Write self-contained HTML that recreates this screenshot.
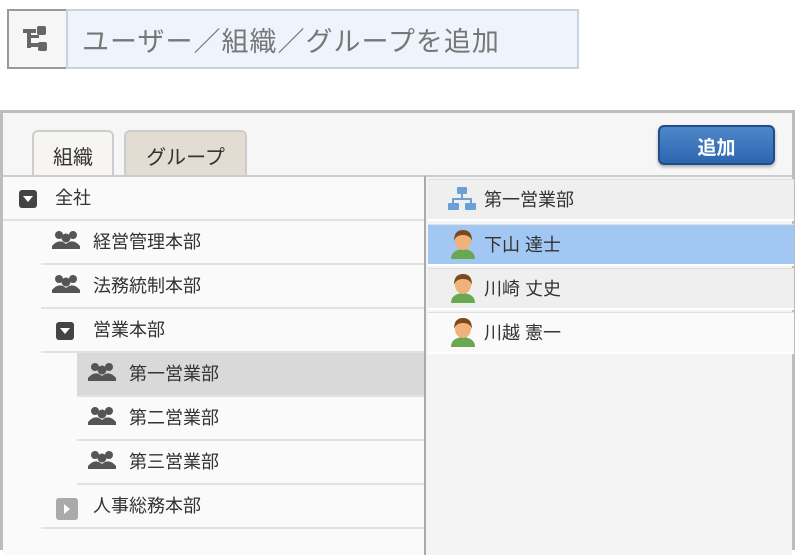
<!DOCTYPE html>
<html><head><meta charset="utf-8"><style>
*{box-sizing:border-box;margin:0;padding:0}
body{width:795px;height:542px;overflow:hidden;background:#fff;font-family:"Liberation Sans","Noto Sans CJK JP",sans-serif;color:#333;position:relative}
.ib{position:absolute;left:7px;top:9px;width:59px;height:60px;border:2px solid #9a9a9a;border-right:none;background:#f6f6f6}
.inp{position:absolute;left:66px;top:9px;width:513px;height:60px;border:2px solid #c9d3dd;background:#edf4fb;font-size:27px;color:#777;padding:9px 0 0 14px;letter-spacing:1px}
.panel{position:absolute;left:0;top:110px;width:795px;height:440px;border:3px solid #bdbdbd;background:#f6f6f6}
.tab{position:absolute;top:17px;height:47px;border:2px solid #ccc;border-bottom:none;border-radius:6px 6px 0 0;font-size:20px;text-align:center;padding-top:9px;color:#333}
.btn{position:absolute;left:655px;top:12px;width:117px;height:40px;border:2px solid #1f4d8a;border-radius:6px;background:linear-gradient(#4f86c8,#2d67b0);color:#fff;font-weight:bold;font-size:19px;text-align:center;padding-top:6px;box-shadow:0 2px 3px rgba(0,0,0,.3)}
.left{position:absolute;left:0;top:62px;width:422px;height:380px;border-top:2px solid #ccc;background:#fafafa;overflow:hidden}
.right{position:absolute;left:421px;top:62px;width:368px;height:380px;border-top:2px solid #ccc;border-left:2px solid #aaa;background:#f4f4f4}
.row{position:absolute;height:44px;border-bottom:2px solid #e2e2e2;font-size:18px;padding-top:7px}
.rr{position:absolute;left:2px;width:366px;height:42px;font-size:18px;padding:6px 0 0 56px;background:#efefef;border-bottom:2px solid #fff;border-top:1px solid #e0e0e0}
.ico{position:absolute}
</style></head><body>
<div class="ib"><svg width="57" height="58"><g fill="#666"><rect x="14" y="18" width="13" height="4"/><rect x="18" y="18" width="4" height="19"/><rect x="18" y="32" width="12" height="4"/><rect x="18" y="24" width="12" height="3"/><rect x="28" y="15" width="9" height="9" rx="2"/><rect x="29" y="31" width="9" height="9" rx="2"/></g></svg></div>
<div class="inp">ユーザー／組織／グループを追加</div>
<div class="panel">
<div class="tab" style="left:29px;width:82px;background:#f7f5f1">組織</div>
<div class="tab" style="left:121px;width:123px;background:#e3dcd3">グループ</div>
<div class="btn">追加</div>
<div class="left">
<div class="row" style="left:0;top:0;width:422px;padding-left:52px"><span class="ico" style="left:16px;top:13px;width:18px;height:18px;background:#444;border-radius:3px"><span style="position:absolute;left:4px;top:6px;border:5px solid transparent;border-top:6px solid #fff"></span></span>全社</div>
<div class="row" style="left:38px;top:44px;width:384px;padding-left:52px"><svg class="ico" style="left:10px;top:8px" width="30" height="22"><g fill="#555"><circle cx="8" cy="6" r="4"/><circle cx="22" cy="6" r="4"/><circle cx="15" cy="9" r="4.5"/><path d="M1 17q7-8 14-2 7-6 14 2v3H1z"/></g></svg>経営管理本部</div>
<div class="row" style="left:38px;top:88px;width:384px;padding-left:52px"><svg class="ico" style="left:10px;top:8px" width="30" height="22"><g fill="#555"><circle cx="8" cy="6" r="4"/><circle cx="22" cy="6" r="4"/><circle cx="15" cy="9" r="4.5"/><path d="M1 17q7-8 14-2 7-6 14 2v3H1z"/></g></svg>法務統制本部</div>
<div class="row" style="left:38px;top:132px;width:384px;padding-left:52px"><span class="ico" style="left:15px;top:13px;width:18px;height:18px;background:#444;border-radius:3px"><span style="position:absolute;left:4px;top:6px;border:5px solid transparent;border-top:6px solid #fff"></span></span>営業本部</div>
<div class="row" style="left:74px;top:176px;width:348px;padding-left:52px;background:#d9d9d9"><svg class="ico" style="left:10px;top:8px" width="30" height="22"><g fill="#555"><circle cx="8" cy="6" r="4"/><circle cx="22" cy="6" r="4"/><circle cx="15" cy="9" r="4.5"/><path d="M1 17q7-8 14-2 7-6 14 2v3H1z"/></g></svg>第一営業部</div>
<div class="row" style="left:74px;top:220px;width:348px;padding-left:52px"><svg class="ico" style="left:10px;top:8px" width="30" height="22"><g fill="#555"><circle cx="8" cy="6" r="4"/><circle cx="22" cy="6" r="4"/><circle cx="15" cy="9" r="4.5"/><path d="M1 17q7-8 14-2 7-6 14 2v3H1z"/></g></svg>第二営業部</div>
<div class="row" style="left:74px;top:264px;width:348px;padding-left:52px"><svg class="ico" style="left:10px;top:8px" width="30" height="22"><g fill="#555"><circle cx="8" cy="6" r="4"/><circle cx="22" cy="6" r="4"/><circle cx="15" cy="9" r="4.5"/><path d="M1 17q7-8 14-2 7-6 14 2v3H1z"/></g></svg>第三営業部</div>
<div class="row" style="left:38px;top:308px;width:384px;padding-left:52px"><span class="ico" style="left:15px;top:13px;width:22px;height:22px;background:#aaa;border-radius:3px"><span style="position:absolute;left:8px;top:6px;border:5px solid transparent;border-left:6px solid #fff"></span></span>人事総務本部</div>
</div>
<div class="right">
<div class="rr" style="top:2px"><svg class="ico" style="left:20px;top:6px" width="28" height="26"><g fill="#6a9fd8"><rect x="9" y="1" width="10" height="7" rx="1"/><rect x="13" y="8" width="2" height="5"/><rect x="4" y="12" width="20" height="2"/><rect x="4" y="12" width="2" height="5"/><rect x="22" y="12" width="2" height="5"/><rect x="0" y="17" width="11" height="7" rx="1"/><rect x="17" y="17" width="11" height="7" rx="1"/></g></svg>第一営業部</div>
<div class="rr" style="top:47px;background:#a2c7f3"><svg class="ico" style="left:21px;top:4px" width="28" height="30"><path d="M2 30q0-9 12-10 12 1 12 10z" fill="#6aa84f"/><ellipse cx="14" cy="12" rx="8" ry="9" fill="#f0b27a"/><path d="M5 12q0-11 9-11 9 0 9 11-2-6-9-6-7 0-9 6z" fill="#7a4a1e"/></svg>下山 達士</div>
<div class="rr" style="top:91px"><svg class="ico" style="left:21px;top:4px" width="28" height="30"><path d="M2 30q0-9 12-10 12 1 12 10z" fill="#6aa84f"/><ellipse cx="14" cy="12" rx="8" ry="9" fill="#f0b27a"/><path d="M5 12q0-11 9-11 9 0 9 11-2-6-9-6-7 0-9 6z" fill="#7a4a1e"/></svg>川崎 丈史</div>
<div class="rr" style="top:135px;background:#fafafa"><svg class="ico" style="left:21px;top:4px" width="28" height="30"><path d="M2 30q0-9 12-10 12 1 12 10z" fill="#6aa84f"/><ellipse cx="14" cy="12" rx="8" ry="9" fill="#f0b27a"/><path d="M5 12q0-11 9-11 9 0 9 11-2-6-9-6-7 0-9 6z" fill="#7a4a1e"/></svg>川越 憲一</div>
</div>
</div>
</body></html>
